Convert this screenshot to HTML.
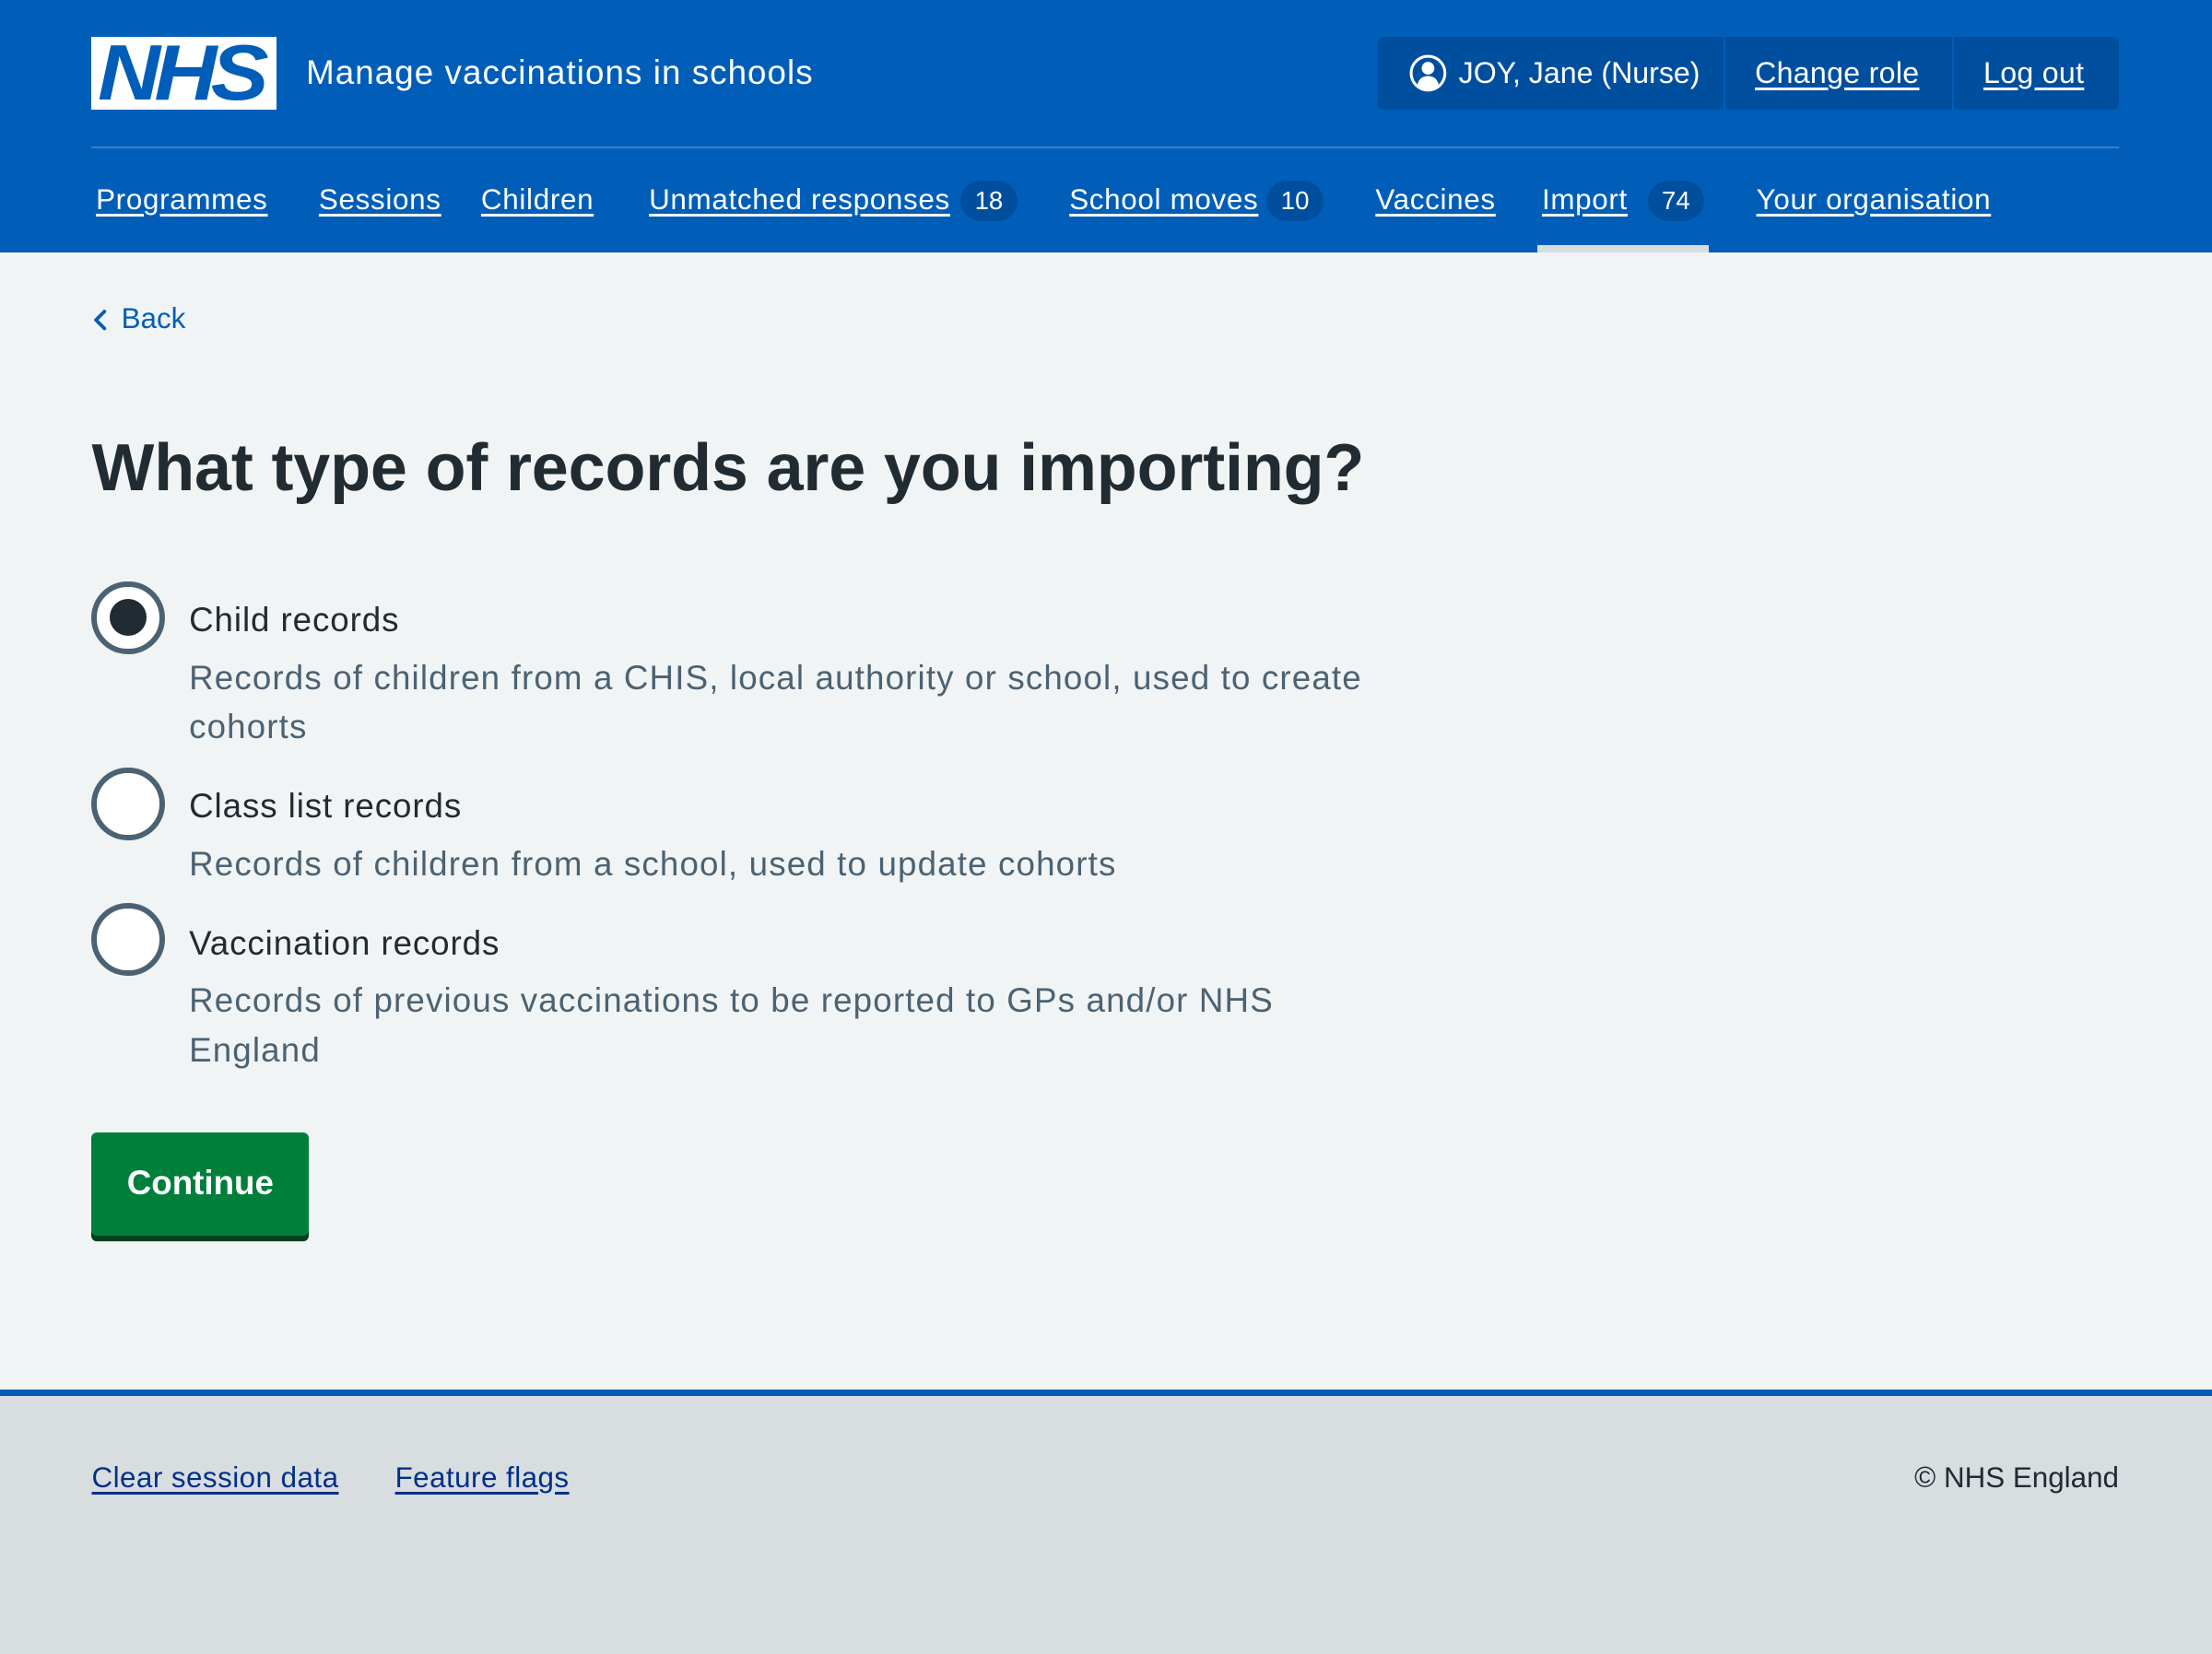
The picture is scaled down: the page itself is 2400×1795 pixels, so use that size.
<!DOCTYPE html>
<html><head><meta charset="utf-8"><style>
html{zoom:1.5306}
body{margin:0;width:1568px;height:1168px;background:#f0f4f5;font-family:"Liberation Sans",Arial,sans-serif;position:relative;overflow:hidden;color:#212b32}
.abs{position:absolute;white-space:nowrap}
header{position:absolute;left:0;top:0;width:1568px;height:179px;background:#005eb8}
.logo{left:65px;top:26px;width:131px;height:52px;background:#fff;overflow:hidden}
.logo span{position:absolute;left:4px;top:-4px;font:italic bold 56px/60px "Liberation Sans",sans-serif;color:#005eb8;letter-spacing:-4px;transform:scaleX(1.1);transform-origin:left}
.title{left:217px;top:38px;font-size:24px;color:#fff;letter-spacing:0.7px}
.acct{left:977px;top:26px;width:525px;height:52px;background:#004f9e;border-radius:4px}
.acct .d{position:absolute;top:0;width:1px;height:52px;background:#005eb8}
.w{color:#fff;font-size:21px}
.u{text-decoration:underline;text-underline-offset:3px}
.line{left:65px;top:104px;width:1437px;height:1px;background:#3f7fc6}
.nav{top:130px;font-size:20.5px;color:#fff;text-decoration:underline;text-underline-offset:3px;letter-spacing:0.45px}
.badge{top:128px;height:29px;border-radius:15px;background:#004f9e;color:#fff;font-size:18px;line-height:29px;text-align:center}
.act{left:1090px;top:174px;width:121px;height:5px;background:#d8dde0}
.back{left:86px;top:214px;font-size:20.5px;color:#005eb8}
h1{position:absolute;margin:0;left:65px;top:305px;font-size:47px;font-weight:bold;letter-spacing:-0.1px;white-space:nowrap}
.radio{position:absolute;left:65px;width:44px;height:44px;border:4px solid #4c6272;border-radius:50%;background:#fff}
.dot{position:absolute;left:9px;top:9px;width:26px;height:26px;border-radius:50%;background:#212b32}
.lab{left:134px;font-size:24px;letter-spacing:0.6px}
.hint{left:134px;font-size:24px;color:#4c6272;letter-spacing:0.75px;line-height:35px}
.btn{left:65px;top:803px;width:154px;height:73px;background:#007f3b;border-radius:4px;box-shadow:0 4px 0 #00401e;color:#fff;font-weight:bold;font-size:24px;line-height:72px;text-align:center}
footer{position:absolute;left:0;top:985px;width:1568px;height:183px;background:#d8dde0;border-top:5px solid #005eb8}
.fl{top:1036px;font-size:20.5px;color:#003087;text-decoration:underline;text-underline-offset:3px;letter-spacing:0.3px}
</style></head><body>
<header></header>
<div class="abs logo"><span>NHS</span></div>
<div class="abs title">Manage vaccinations in schools</div>
<div class="abs acct"><div class="d" style="left:245px"></div><div class="d" style="left:407px"></div></div>
<svg class="abs" style="left:998px;top:38px" width="28" height="28" viewBox="0 0 28 28"><circle cx="14" cy="14" r="12" fill="none" stroke="#fff" stroke-width="2"/><circle cx="14" cy="10.5" r="4.5" fill="#fff"/><path d="M6.5 22 Q8 16 14 16 Q20 16 21.5 22 Q18 25.5 14 25.5 Q10 25.5 6.5 22Z" fill="#fff"/></svg>
<div class="abs w" style="left:1034px;top:40px">JOY, Jane (Nurse)</div>
<div class="abs w u" style="left:1244px;top:40px;letter-spacing:0.2px">Change role</div>
<div class="abs w u" style="left:1406px;top:40px;letter-spacing:0.2px">Log out</div>
<div class="abs line"></div>
<div class="abs nav" style="left:68px">Programmes</div>
<div class="abs nav" style="left:226px">Sessions</div>
<div class="abs nav" style="left:341px">Children</div>
<div class="abs nav" style="left:460px">Unmatched responses</div>
<div class="abs badge" style="left:681px;width:40px">18</div>
<div class="abs nav" style="left:758px">School moves</div>
<div class="abs badge" style="left:898px;width:40px">10</div>
<div class="abs nav" style="left:975px">Vaccines</div>
<div class="abs nav" style="left:1093px">Import</div>
<div class="abs badge" style="left:1168px;width:40px">74</div>
<div class="abs nav" style="left:1245px">Your organisation</div>
<div class="abs act"></div>
<svg class="abs" style="left:64px;top:219px" width="14" height="16" viewBox="0 0 14 16"><path d="M10 2 L4 8 L10 14" fill="none" stroke="#005eb8" stroke-width="2.5" stroke-linecap="round" stroke-linejoin="round"/></svg>
<div class="abs back">Back</div>
<h1>What type of records are you importing?</h1>
<div class="radio" style="top:412px"><div class="dot"></div></div>
<div class="abs lab" style="top:426px">Child records</div>
<div class="abs hint" style="top:463px">Records of children from a CHIS, local authority or school, used to create<br>cohorts</div>
<div class="radio" style="top:544px"></div>
<div class="abs lab" style="top:558px">Class list records</div>
<div class="abs hint" style="top:595px">Records of children from a school, used to update cohorts</div>
<div class="radio" style="top:640px"></div>
<div class="abs lab" style="top:655px">Vaccination records</div>
<div class="abs hint" style="top:692px">Records of previous vaccinations to be reported to GPs and/or NHS<br>England</div>
<div class="abs btn">Continue</div>
<footer></footer>
<div class="abs fl" style="left:65px">Clear session data</div>
<div class="abs fl" style="left:280px">Feature flags</div>
<div class="abs" style="right:66px;top:1036px;font-size:20.5px">© NHS England</div>
</body></html>
